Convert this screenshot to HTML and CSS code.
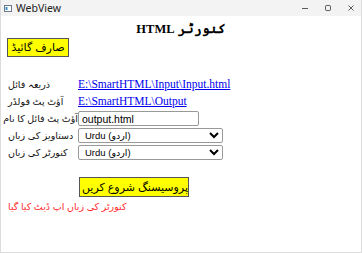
FILE: index.html
```html
<!DOCTYPE html>
<html lang="ur">
<head>
  <meta charset="UTF-8" />
  <title>WebView</title>
  <link rel="stylesheet" href="styles.css">
</head>
<body>
  <div class="window">
    <div class="titlebar">
      <svg class="app-icon" width="8" height="7" viewBox="0 0 8 7">
        <rect x="0.5" y="0.5" width="7" height="6" fill="#fff" stroke="#6a7a8a"/>
        <rect x="1.5" y="2" width="2" height="3" fill="#3b8fd0"/>
      </svg>
      <span class="win-title">WebView</span>
      <div class="win-controls">
        <svg width="8" height="8" viewBox="0 0 8 8"><path d="M1 4.5h6" stroke="#333" stroke-width="0.8"/></svg>
        <svg width="8" height="8" viewBox="0 0 8 8"><rect x="1.5" y="1.5" width="5" height="5" rx="0.8" fill="none" stroke="#333" stroke-width="0.8"/></svg>
        <svg width="8" height="8" viewBox="0 0 8 8"><path d="M1.5 1.5l5 5M6.5 1.5l-5 5" stroke="#333" stroke-width="0.8"/></svg>
      </div>
    </div>

    <div class="page">
      <h1 class="heading" dir="rtl">کنورٹر HTML</h1>
      <button class="btn guide">صارف گائیڈ</button>

      <div class="form">
        <span class="label">ذریعہ فائل</span>
        <a href="#" class="path">E:\SmartHTML\Input\Input.html</a>

        <span class="label">آؤٹ پٹ فولڈر</span>
        <a href="#" class="path">E:\SmartHTML\Output</a>

        <span class="label">آؤٹ پٹ فائل کا نام</span>
        <input type="text" class="field" value="output.html" />

        <span class="label">دستاویز کی زبان</span>
        <select class="choice">
          <option>Urdu (اردو)</option>
        </select>

        <span class="label">کنورٹر کی زبان</span>
        <select class="choice">
          <option>Urdu (اردو)</option>
        </select>
      </div>

      <button class="btn start">پروسیسنگ شروع کریں</button>
      <div class="status" dir="rtl">کنورٹر کی زبان اپ ڈیٹ کیا گیا</div>
    </div>
  </div>
</body>
</html>
```

FILE: styles.css
```css
html, body {
  margin: 0;
  padding: 0;
  background: #fff;
}
.window {
  width: 362px;
  height: 253px;
  box-sizing: border-box;
  border: 1px solid #dcdcdc;
  border-top: none;
  display: flex;
  flex-direction: column;
  overflow: hidden;
}
.titlebar {
  height: 16px;
  background: #f3f3f3;
  display: flex;
  align-items: center;
  padding-left: 3px;
  font-family: "Noto Sans", "Liberation Sans", sans-serif;
}
.app-icon {
  margin-right: 4px;
}
.win-title {
  font-size: 10.5px;
  color: #222;
}
.win-controls {
  margin-left: auto;
  display: flex;
  gap: 15px;
  padding-right: 6px;
}
.page {
  padding: 0 6px;
  font-family: "Liberation Serif", "DejaVu Serif", serif;
}
.heading {
  margin: 4px 0 0;
  font-size: 12.5px;
  line-height: 18px;
  text-align: center;
  font-weight: bold;
}
.btn {
  display: block;
  background: #ffff00;
  border: 1px solid #555;
  border-radius: 0;
  padding: 0 2px;
  white-space: nowrap;
  font-family: "Liberation Sans", "DejaVu Sans", sans-serif;
  font-size: 11px;
  color: #000;
}
.guide {
  width: 62px;
  height: 19px;
}
.form {
  margin-top: 20px;
  display: grid;
  grid-template-columns: 71px auto;
  align-items: center;
  row-gap: 2px;
  justify-items: start;
}
.label {
  width: 70px;
  padding-left: 1px;
  direction: rtl;
  text-align: left;
  white-space: nowrap;
  font-family: "Liberation Sans", "DejaVu Sans", sans-serif;
  font-size: 9.5px;
  color: #111;
  line-height: 15px;
}
.path {
  color: #0000ee;
  font-size: 11.5px;
  line-height: 15px;
}
.field {
  width: 121px;
  height: 15px;
  box-sizing: border-box;
  border: 1px solid #999;
  border-radius: 2px;
  padding: 0 3px;
  font-family: "Liberation Sans", sans-serif;
  font-size: 10.5px;
}
.choice {
  width: 145px;
  height: 15px;
  box-sizing: border-box;
  border: 1px solid #999;
  border-radius: 2px;
  padding: 0 2px;
  font-family: "Liberation Sans", "DejaVu Sans", sans-serif;
  font-size: 9.5px;
  background: #fff;
}
.start {
  margin: 17px 0 0 72px;
  width: 110px;
  height: 20px;
}
.status {
  margin-top: 4px;
  padding-left: 1px;
  text-align: left;
  color: #ff2a2a;
  font-family: "Liberation Sans", "DejaVu Sans", sans-serif;
  font-size: 9.5px;
  line-height: 12px;
}
```
